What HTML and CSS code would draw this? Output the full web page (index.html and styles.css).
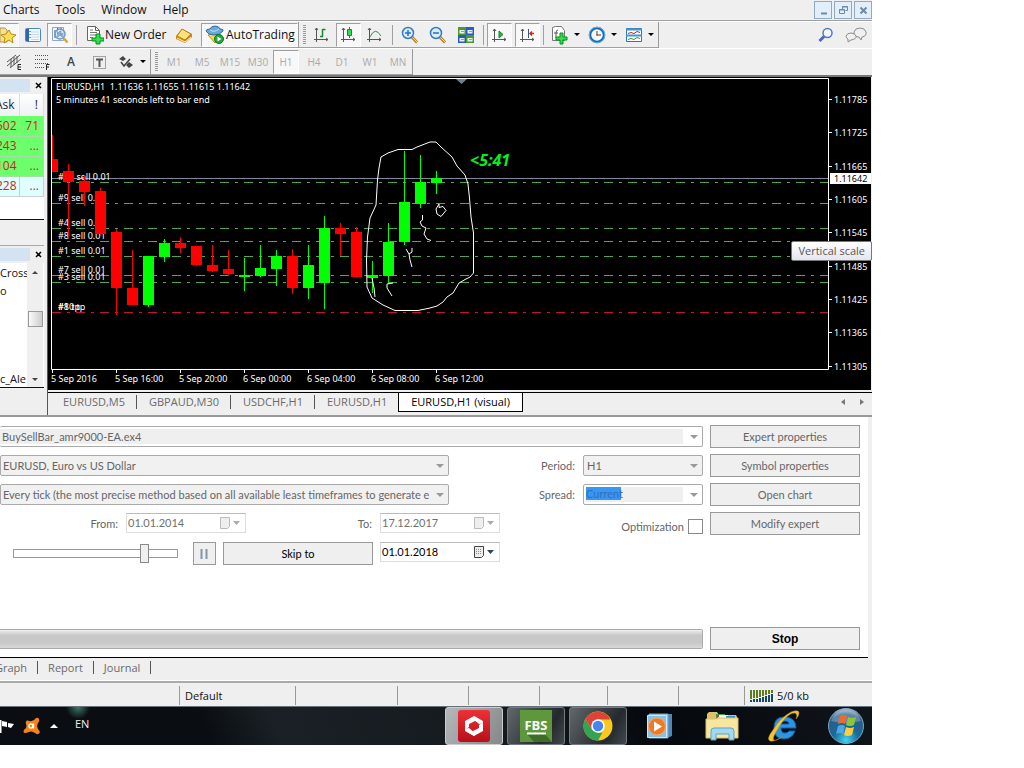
FILE: index.html
```html
<!DOCTYPE html>
<html lang="en">
<head>
<meta charset="utf-8">
<title>EURUSD,H1 (visual)</title>
<link rel="stylesheet" href="styles.css">
</head>
<body>
<div class="desktop">
  <header class="menubar">
    <nav class="menus"><a href="#">Charts</a><a href="#">Tools</a><a href="#">Window</a><a href="#">Help</a></nav>
    <div class="winbtns">
      <button aria-label="Minimize"><svg width="15" height="15"><path d="M5 10.5h6" stroke="#6d8ba6" stroke-width="2"/></svg></button>
      <button aria-label="Restore"><svg width="15" height="15" fill="none" stroke="#6d8ba6"><path d="M6.5 6V3.500h5v4h-2M6 4h6" /><path d="M3.500 6.500h5v4h-5zM3 7h6"/></svg></button>
      <button aria-label="Close"><svg width="15" height="15"><path d="M4.500 4.500l6 6m0-6l-6 6" stroke="#6d8ba6" stroke-width="2"/></svg></button>
    </div>
  </header>

  <div class="toolbar">
    <div class="group first">
      <button class="tool on cut" aria-label="Favorites"><svg width="18" height="20"><path d="M0 3h5l2 2v12H0z" fill="#f5df9a" stroke="#b99a45"/><path d="M9 5l2 4 5 1-4 3 1 5-4-3-5 3 1-5-4-3 5-1z" fill="#ffdf50" stroke="#b98a20"/></svg></button>
      <button class="tool" aria-label="Market Watch"><svg width="18" height="18"><rect x="1.500" y="2.500" width="15" height="13" rx="1" fill="#f4f9ff" stroke="#4a86c4"/><path d="M2 3h3v12H2z" fill="#2c66ad"/><path d="M7 6h8M7 8.500h8M7 11h8M7 13.500h8" stroke="#c4d8ec"/><path d="M6 5v9" stroke="#333" stroke-dasharray="1 2"/></svg></button>
      <button class="tool on" aria-label="Navigator"><svg width="20" height="20" fill="none"><path d="M2.500 2.500h11v13h-11z" fill="#f1f7ff" stroke="#8aa8cb"/><path d="M5 5v8M7.500 3v6M11 3v8" stroke="#555"/><circle cx="10" cy="9" r="5" fill="#cfe6fa" fill-opacity=".7" stroke="#6a9bd0" stroke-width="1.500"/><path d="M8 7v5M10 6v5M12 8v4" stroke="#4775a8"/><path d="M13.500 13l4 4.500" stroke="#d2a544" stroke-width="2.500"/></svg></button>
      <i class="sep"></i>
      <button class="tool text neworder"><svg width="18" height="20"><path d="M1.500 1.500h8l4 4v10h-12z" fill="#fff" stroke="#666"/><path d="M9.500 1.500v4h4" fill="none" stroke="#666"/><path d="M4 5h3M4 7.500h7M4 10h7M4 12.500h3" stroke="#777"/><path d="M10 9h4v4h4v3h-4v3h-4v-3H6v-3h4z" fill="#2fe04b" stroke="#0a8a1c"/></svg>New Order</button>
      <button class="tool" aria-label="MetaEditor"><svg width="18" height="18"><path d="M1 10l6-7 10 5v3l-7 6-9-4z" fill="#c98a14"/><path d="M2 10l5-7 9 5-6 6z" fill="#ffe07a" stroke="#b87b12"/><path d="M2 12l8 4 6-5" fill="none" stroke="#fff0b5"/></svg></button>
      <button class="tool on text auto"><svg width="20" height="20"><path d="M3 10l7 8 7-7-6-3z" fill="#f6d74c" stroke="#b7952b"/><path d="M1 6q0-2 4-2 1-3 5-3t5 3q4 0 3 2-3 4-9 4T1 6z" fill="#68a9dd" stroke="#346d9e"/><path d="M5 5q4 3 9-1" fill="none" stroke="#c4e3f8"/><circle cx="14" cy="14" r="4.500" fill="#1eab3a" stroke="#0c7422"/><path d="M12.500 11.500l4 2.500-4 2.500z" fill="#fff"/></svg>AutoTrading</button>
    </div>
    <div class="group">
      <i class="grip"></i>
      <button class="tool" aria-label="Bar Chart"><svg width="18" height="18" fill="none" stroke="#555"><path d="M3.500 2v14M1 13.500h14M2 4l1.500-2L5 4M13 12l2 1.500L13 15"/><path d="M9.500 3v8M9.500 3.500h3M7 10.500h3" stroke="#138a2c" stroke-width="1.500"/></svg></button>
      <button class="tool on" aria-label="Candlesticks"><svg width="18" height="18" fill="none" stroke="#555"><path d="M3.500 2v14M1 13.500h14M2 4l1.500-2L5 4M13 12l2 1.500L13 15"/><path d="M9.500 1v11" stroke="#138a2c"/><path d="M7.500 3.500h4v6h-4z" fill="#2edb55" stroke="#138a2c"/></svg></button>
      <button class="tool" aria-label="Line Chart"><svg width="18" height="18" fill="none" stroke="#555"><path d="M3.500 2v14M1 13.500h14M2 4l1.500-2L5 4M13 12l2 1.500L13 15"/><path d="M4 11q5-11 11-1" stroke="#2c9a45"/></svg></button>
      <i class="sep"></i>
      <button class="tool" aria-label="Zoom In"><svg width="18" height="18"><path d="M10.500 10.500l5.500 6" stroke="#b08a20" stroke-width="3"/><path d="M11 11l5 5" stroke="#f5dd70"/><circle cx="7" cy="7" r="5.500" fill="#d9eefc" stroke="#3a78c2" stroke-width="1.500"/><path d="M4 7h6M7 4v6" stroke="#2c6ebd" stroke-width="1.500"/></svg></button>
      <button class="tool" aria-label="Zoom Out"><svg width="18" height="18"><path d="M10.500 10.500l5.500 6" stroke="#b08a20" stroke-width="3"/><path d="M11 11l5 5" stroke="#f5dd70"/><circle cx="7" cy="7" r="5.500" fill="#d9eefc" stroke="#3a78c2" stroke-width="1.500"/><path d="M4 7h6" stroke="#2c6ebd" stroke-width="1.500"/></svg></button>
      <button class="tool" aria-label="Tile Windows"><svg width="18" height="18"><path d="M1 1h8v8H1zM9 9h8v8H9z" fill="#4c9a2a"/><path d="M9 1h8v8H9zM1 9h8v8H1z" fill="#2b5bbd"/><path d="M2.500 4h5v3.500h-5zM10.500 4h5v3.500h-5zM2.500 12h5v3.500h-5zM10.500 12h5v3.500h-5z" fill="#e6f1fb"/><path d="M4 5.500h3M12 5.500h3M4 13.500h3M12 13.500h3" stroke="#7aa6d0"/></svg></button>
      <i class="sep"></i>
      <button class="tool on" aria-label="Auto Scroll"><svg width="18" height="18" fill="none" stroke="#555"><path d="M3.500 3v13M1 13.500h14M2 5l1.500-2L5 5M13 12l2 1.500L13 15"/><path d="M8 5l4 3.500-4 3.500z" fill="#24b545" stroke="#138a2c"/></svg></button>
      <button class="tool on shift" aria-label="Chart Shift"><svg width="18" height="18" fill="none" stroke="#555"><path d="M3.500 3v13M1 13.500h14M2 5l1.500-2L5 5M13 12l2 1.500L13 15"/><path d="M9.500 3v9" stroke="#36598a"/><path d="M15 7.500h-4M13 5.500l-2 2 2 2" stroke="#c22c18" stroke-width="1.500"/></svg></button>
      <i class="sep"></i>
      <button class="tool drop" aria-label="Indicators"><svg width="18" height="20"><path d="M1.500 2.500l3-1h6l3 4v10h-12z" fill="#fff" stroke="#777"/><path d="M7 5q-2 0-2 3v5M3 8h4" stroke="#555" fill="none"/><path d="M9 8h3v4h4v3h-4v4H9v-4H5v-3h4z" fill="#2fe04b" stroke="#0a8a1c"/></svg></button>
      <button class="tool drop" aria-label="Periods"><svg width="18" height="18"><circle cx="9" cy="9" r="7" fill="#f4faff" stroke="#1668b5" stroke-width="2.500"/><circle cx="9" cy="9" r="7.800" fill="none" stroke="#58b5ee"/><path d="M9 5v4h4" fill="none" stroke="#444"/><circle cx="9" cy="9" r="1" fill="#e05b22"/></svg></button>
      <button class="tool drop" aria-label="Templates"><svg width="18" height="18" fill="none"><path d="M1.500 2.500h15v13h-15z" fill="#fff" stroke="#2c74b8"/><path d="M1 3.500h16M1 9.500h16" stroke="#4c92cf" stroke-width="2"/><path d="M3 7.500l3-1 3 1 3-2 3 1" stroke="#9a352c"/><path d="M3 13.500l3-1 3 1 3-2 3 1" stroke="#2d9c42"/></svg></button>
    </div>
    <div class="right">
      <button class="tool" aria-label="Search"><svg width="16" height="16" fill="none"><path d="M6.500 9l-5 5" stroke="#4e69bb" stroke-width="3"/><circle cx="9.500" cy="6" r="4.500" fill="#f3f8ff" stroke="#5573c9" stroke-width="1.500"/></svg></button>
      <button class="tool" aria-label="Chat"><svg width="22" height="18" fill="#f0f0f0" stroke="#8b8b8b"><path d="M9 6q1-4 6-4t6 4-4 5l-1 3-2-3q-5 0-5-5z"/><path d="M1 10q1-3 5-3t5 3-5 4l-3 2v-3q-2-1-2-3z"/></svg></button>
    </div>
  </div>

  <div class="toolbar second">
    <div class="group first">
      <button class="tool" aria-label="Equidistant Channel"><svg width="18" height="18" fill="none" stroke="#555"><path d="M1 13L14 2M1 9l9-7M4 15l11-9M5 6v8M8 4v8M11 3v7"/><path d="M15 11.500h-3v5h3M12 14h3" stroke="#222"/></svg></button>
      <button class="tool" aria-label="Fibonacci"><svg width="18" height="18" fill="none"><path d="M1 2.500h14M1 6.500h14M1 10.500h14M1 14.500h9" stroke="#555" stroke-dasharray="1 1"/><path d="M12.500 17v-5.500h3M12 14h3" stroke="#222"/></svg></button>
      <button class="tool letter">A</button>
      <button class="tool" aria-label="Text Label"><svg width="18" height="18" fill="none"><path d="M3.500 3.500h12v12h-12z" stroke="#555" stroke-dasharray="1 1"/><path d="M6 6.500h7M9.500 6v8" stroke="#555" stroke-width="2"/></svg></button>
      <button class="tool drop arrows" aria-label="Arrows"><svg width="18" height="18"><path d="M2 6l4-3 3 3-3 2zM9 12l3-3 4 3-4 3z" fill="#444"/><path d="M4 9l3 4 6-7" fill="none" stroke="#444" stroke-width="1.500"/></svg></button>
    </div>
    <div class="group frames">
      <i class="grip"></i>
      <button>M1</button><button>M5</button><button>M15</button><button>M30</button><button class="on">H1</button><button>H4</button><button>D1</button><button>W1</button><button>MN</button>
    </div>
  </div>

  <main class="work">
    <aside class="side">
      <div class="panelhead"><span></span><button aria-label="Close Market Watch"><svg width="7" height="7"><path d="M1 1l5 5m0-5L1 6" stroke="#000" stroke-width="1.500"/></svg></button></div>
      <table class="watch">
        <thead><tr><th>Ask</th><th>!</th></tr></thead>
        <tbody>
          <tr><td>502</td><td>71</td></tr>
          <tr><td>243</td><td>...</td></tr>
          <tr><td>104</td><td>...</td></tr>
          <tr class="cyan"><td>228</td><td>...</td></tr>
        </tbody>
      </table>
      <div class="blank"></div>
      <div class="spacer"></div>
      <div class="panelhead"><span></span><button aria-label="Close Navigator"><svg width="7" height="7"><path d="M1 1l5 5m0-5L1 6" stroke="#000" stroke-width="1.500"/></svg></button></div>
      <div class="tree">
        <div class="names"><span>Cross_</span><span>o</span><span class="last">c_Ale</span></div>
        <div class="scroll"><i class="up"></i><i class="thumb"></i><i class="down"></i></div>
      </div>
    </aside>

    <section class="charts">
      <div class="chartbox">
      <svg class="chart" viewBox="48 77 823 313" role="img" aria-label="EURUSD H1 chart">
        <rect x="48" y="77" width="823" height="313" fill="#000"/>
        <path d="M456 79h11l-5.500 5z" fill="#708090"/>
        <g><text x="56" y="90">EURUSD,H1&#160; 1.11636 1.11655 1.11615 1.11642</text><text x="56" y="103">5 minutes 41 seconds left to bar end</text></g>
        <path d="M52 178.500H828" stroke="#8288a0"/>
        <path class="orders" d="M52 182.500H828M52 203.500H828M52 228.500H828M52 241.500H828M52 256.500H828M52 275.500H828M52 282.500H828"/>
        <path class="orders loss" d="M52 312.500H828"/>
        <g>
          <text x="58" y="180">#10 sell 0.01</text><text x="58" y="201">#9 sell 0.01</text><text x="58" y="226">#4 sell 0.01</text><text x="58" y="239">#8 sell 0.01</text><text x="58" y="254">#1 sell 0.01</text><text x="58" y="273">#7 sell 0.01</text><text x="58" y="280">#3 sell 0.01</text><text x="58" y="310">#8 tp</text><text x="58" y="310">#10 tp</text>
        </g>
        <path class="wick down" d="M52.500 135V172M68.500 164V238M84.500 175V206M100.500 188V236M116.500 229V315M132.500 250V305M180.500 237V253M196.500 246V266M212.500 245V272M228.500 250V276M292.500 249V294M340.500 223V256M356.500 227V278"/>
        <path class="wick up" d="M148.500 256V307M164.500 239V262M244.500 258V291M260.500 245V277M276.500 250V286M308.500 245V299M324.500 216V309M372.500 261V293M388.500 223V284M404.500 151V245M420.500 155V208M436.500 171V194"/>
        <path fill="#f00" d="M52 159h6v13h-6zM63 171h11v11h-11zM79 181h11v11h-11zM95 191h11v43h-11zM111 232h11v56h-11zM127 288h11v17h-11zM175 243h11v5h-11zM191 246h11v19h-11zM207 265h11v6h-11zM223 269h11v5h-11zM287 256h11v32h-11zM335 228h11v6h-11zM351 232h11v45h-11z"/>
        <path fill="#0f0" d="M143 256h11v49h-11zM159 243h11v14h-11zM239 275h11v2h-11zM255 268h11v8h-11zM271 256h11v13h-11zM303 265h11v23h-11zM319 228h11v55h-11zM367 275h11v3h-11zM383 242h11v34h-11zM399 202h11v40h-11zM415 182h11v22h-11zM431 178h11v5h-11z"/>
        <path class="ink" d="M381 157L388 153 398 149.500 412 149.500 417 147 430 142 436 142 441 147 452 157 457 166 465 175 468 184 469.500 198 471 217 473.500 233 473.500 273 470 277 466 279 459 283 453 293 447 297 443 302 437 306 430 308 418 310.500 395 310.500 383 305 372 298 367 287 366.500 260 367.500 237 370 218 376 205 377.500 180 379 168z"/>
        <path class="ink" d="M422.500 215v5l-2.500 2 2 4 4 2-2 6 3 5 4 1.500M406 249l3 5 3-2v-4M409 254l1 6 2 7M372 278l2 10 1 9M393 283l-6 1v4l5 8M439 204l-3 5 1 5 4 2.500 5-6-3-4-4 1z"/>
        <text class="timer" x="470" y="166">&lt;5:41</text>
        <path d="M51.500 78.500H828.500V369.500H51.500z" fill="none" stroke="#fff"/>
        <path stroke="#fff" d="M829 99.500h3M829 132.500h3M829 166.500h3M829 199.500h3M829 232.500h3M829 266.500h3M829 299.500h3M829 332.500h3M829 366.500h3M52.500 370v3M116.500 370v3M180.500 370v3M244.500 370v3M308.500 370v3M372.500 370v3M436.500 370v3"/>
        <rect x="830" y="173" width="41" height="11" fill="#fff"/>
        <g><text x="834" y="103">1.11785</text><text x="834" y="136">1.11725</text><text x="834" y="170">1.11665</text><text x="834" y="182" fill="#000">1.11642</text><text x="834" y="203">1.11605</text><text x="834" y="236">1.11545</text><text x="834" y="270">1.11485</text><text x="834" y="303">1.11425</text><text x="834" y="336">1.11365</text><text x="834" y="370">1.11305</text></g>
        <g><text x="51" y="382">5 Sep 2016</text><text x="115" y="382">5 Sep 16:00</text><text x="179" y="382">5 Sep 20:00</text><text x="243" y="382">6 Sep 00:00</text><text x="307" y="382">6 Sep 04:00</text><text x="371" y="382">6 Sep 08:00</text><text x="435" y="382">6 Sep 12:00</text></g>
      </svg>
      <div class="tip" role="tooltip">Vertical scale</div>
      </div>
      <nav class="tabs"><a href="#">EURUSD,M5</a><a href="#">GBPAUD,M30</a><a href="#">USDCHF,H1</a><a href="#" class="plain">EURUSD,H1</a><a href="#" class="active">EURUSD,H1 (visual)</a>
        <span class="nudge"><button aria-label="Scroll tabs left"><svg width="4" height="6"><path d="M4 0v6L0 3z" fill="#777"/></svg></button><button aria-label="Scroll tabs right"><svg width="4" height="6"><path d="M0 0v6l4-3z" fill="#777"/></svg></button></span></nav>
    </section>
  </main>

  <section class="tester">
    <form class="form">
      <div class="row">
        <div class="combo open"><select aria-label="Expert" disabled><option>BuySellBar_amr9000-EA.ex4</option></select></div>
        <button type="button" class="btn off">Expert properties</button>
      </div>
      <div class="row">
        <div class="combo"><select aria-label="Symbol" disabled><option>EURUSD, Euro vs US Dollar</option></select></div>
        <label for="period">Period:</label>
        <div class="combo small"><select id="period" disabled><option>H1</option></select></div>
        <button type="button" class="btn off">Symbol properties</button>
      </div>
      <div class="row">
        <div class="combo"><select aria-label="Model" disabled><option>Every tick (the most precise method based on all available least timeframes to generate each tick)</option></select></div>
        <label for="spread">Spread:</label>
        <div class="combo open small"><input id="spread" value="Current" readonly></div>
        <button type="button" class="btn off">Open chart</button>
      </div>
      <div class="row">
        <label class="from" for="from">From:</label>
        <div class="date off"><input id="from" value="01.01.2014" disabled><svg width="22" height="14"><path d="M1.500 1.500h9v9l-2 2h-7z" fill="#eee" stroke="#bbb"/><path d="M14 5h7l-3.500 4z" fill="#aaa"/></svg></div>
        <label for="to">To:</label>
        <div class="date off"><input id="to" value="17.12.2017" disabled><svg width="22" height="14"><path d="M1.500 1.500h9v9l-2 2h-7z" fill="#eee" stroke="#bbb"/><path d="M14 5h7l-3.500 4z" fill="#aaa"/></svg></div>
        <label class="opt">Optimization <input type="checkbox" disabled></label>
        <button type="button" class="btn off">Modify expert</button>
      </div>
      <div class="row skip">
        <input class="slider" type="range" min="0" max="100" value="82" aria-label="Speed">
        <button type="button" class="btn pause" aria-label="Pause"><svg width="9" height="12"><path d="M1.500 1v10M6.500 1v10" stroke="#8594a8" stroke-width="2"/></svg></button>
        <button type="button" class="btn">Skip to</button>
        <div class="date"><input aria-label="Skip to date" value="01.01.2018"><svg width="22" height="14"><path d="M1.500 1.500h9v9l-2 2h-7z" fill="#eee" stroke="#444"/><path d="M3 4.500h6M3 6.500h6M3 8.500h6" stroke="#888" stroke-dasharray="1 1"/><path d="M14 5h7l-3.500 4z" fill="#345"/></svg></div>
      </div>
      <div class="row run">
        <div class="progress" role="progressbar" aria-label="Testing progress"></div>
        <button type="button" class="btn halt">Stop</button>
      </div>
    </form>
  </section>
  <nav class="subtabs"><a href="#">Graph</a><a href="#">Report</a><a href="#">Journal</a></nav>

  <footer class="status">
    <span class="s1"></span><span class="s2">Default</span><span class="s3"></span><span class="s4"></span><span class="s4"></span><span class="s5"></span><span class="s4"></span><span class="s6"></span>
    <span class="net"><svg width="24" height="14"><path d="M1 1v9M4 1v8M7 1v8M10 1v7M13 1v6M16 1v5M19 1v4M22 1v3" stroke="#5c7d1e" stroke-width="2"/><path d="M1 11v2M4 10v3M7 10v3M10 9v4M13 8v5M16 7v6M19 6v7M22 5v8" stroke="#164866" stroke-width="2"/></svg>5/0 kb</span>
  </footer>

  <div class="taskbar">
    <div class="tray">
      <svg width="14" height="16"><path d="M0 2h1.500v13H0zM2 3l5 1v5L2 8zM8 5l6 1-3 4-3-1z" fill="#fff"/></svg>
      <svg width="18" height="18"><path d="M5 3.500Q8 5 11 3l2-2q2-1 3 1t-1 4l-1 3 1 3q3 3 1 4.500T12 16l-2-1q-2-1-4 0-5 2-5.500 0T3 11q1-2 0-4-1-4 2-3.500z" fill="#f58216"/><circle cx="8" cy="9" r="2" fill="none" stroke="#fff" stroke-width="1.300"/><path d="M10.500 6.500v5" stroke="#fff" stroke-width="1.300"/></svg>
      <svg width="8" height="6"><path d="M0 5h8L4 1z" fill="#fff"/></svg>
      <span>EN</span>
    </div>
    <div class="apps">
      <button class="running lit" aria-label="Trading terminal"><svg width="32" height="32"><defs><linearGradient id="r" x2="0" y2="1"><stop stop-color="#ee3038"/><stop offset="1" stop-color="#b80f19"/></linearGradient></defs><rect width="32" height="32" rx="3" fill="url(#r)"/><path d="M7 20v-9l9-5 5 3-10 5v3zM25 12v9l-9 5-5-3 10-5v-3z" fill="#fff"/><path d="M16 6l9 5v2l-4 1-6-5zM16 26l-9-5v-2l4-1 6 5z" fill="#fff"/></svg></button>
      <button class="running" aria-label="FBS"><svg width="32" height="32"><rect width="32" height="32" fill="#5f973d"/><path d="M7 24h18l7 8H14z" fill="#3f6d28"/><text x="16" y="20" text-anchor="middle" class="fbs">FBS</text><path d="M7 23.500h19" stroke="#fff" stroke-width="2"/></svg></button>
      <button class="running" aria-label="Chrome"><svg width="30" height="30"><circle cx="15" cy="15" r="14.500" fill="#fbc91d"/><path d="M15 29.500A14.500 14.500 0 0 1 2.400 7.700L9 18.500 15 22l4.500-.5z" fill="#35a353"/><path d="M9 18.500L2.400 7.700A14.500 14.500 0 0 1 27.600 8.500H15z" fill="#db4437"/><circle cx="15" cy="15" r="6.800" fill="#fff"/><circle cx="15" cy="15" r="5.200" fill="#4285f4"/></svg></button>
      <button aria-label="Media Player"><svg width="28" height="28"><path d="M5 2h21v22l-5 2H5z" fill="#4d88b6"/><path d="M3 2h19v24H3z" fill="#a6d3ee" stroke="#6ca7cf"/><path d="M1.500 3.500h19v22h-19z" fill="#8bbfe0" stroke="#cfe8f7"/><circle cx="11" cy="14.500" r="8.500" fill="#ef7a25" stroke="#f6a861"/><path d="M8 9.500l8 5-8 5z" fill="#fff"/></svg></button>
      <button aria-label="Explorer"><svg width="34" height="30"><path d="M2 3l2-2h8l2 3h17l1 2v20H2z" fill="#dfc36a"/><path d="M11 3h9v5h-9z" fill="#3d9a4b"/><path d="M13 4h10v4H13z" fill="#fff"/><path d="M21 5h9v4h-9z" fill="#2d8fd0"/><path d="M12 4h2v2h-2z" fill="#d33"/><path d="M1 8h10l2-1h20v20H1z" fill="#f6e6a0" stroke="#dcc26c"/><path d="M6 29v-9q0-3 3-3h17q3 0 3 3v9h-5v-6H11v6z" fill="#a5d8f0" stroke="#58a4cb"/></svg></button>
      <button aria-label="Internet Explorer"><svg width="34" height="32"><path d="M29 18H14q0 5 4 5 3 0 4-2h6q-3 8-11 8-10 0-10-11T17 7q12 0 12 11zM14 14h8q0-3-4-3t-4 3z" fill="#2a95e2" stroke="#0e60ae"/><path d="M9 22q-4 7-2 8 3 1 9-4-8 6-13 5-4-2 3-11Q13 8 24 2q8-3 8 1 0 3-3 6 2-5-1-6-8-1-19 19z" fill="#f3c530" stroke="#b98818" stroke-width=".5"/></svg></button>
      <button aria-label="Start"><svg width="38" height="36"><defs><radialGradient id="orb" cx=".5" cy=".9" r=".9"><stop stop-color="#3fd5f5"/><stop offset=".4" stop-color="#176a9d"/><stop offset=".8" stop-color="#2c5c83"/><stop offset="1" stop-color="#a5c3d9"/></radialGradient></defs><circle cx="19" cy="18" r="17.500" fill="url(#orb)" stroke="#7ba5c2"/><path d="M4 13Q8 2 19 2t15 11Q19 17 4 13z" fill="#fff" fill-opacity=".25"/><path d="M13 8q4-2 7 0l-2 8q-3-2-7 0z" fill="#ef6a32"/><path d="M21 9q4 2 8 0l-2 8q-4 2-8 0z" fill="#8cc63f"/><path d="M11 18q4-2 7 0l-2 8q-3-2-7 0z" fill="#4fa5e5"/><path d="M19 19q4 2 8 0l-2 8q-4 2-8 0z" fill="#fccf3c"/></svg></button>
    </div>
  </div>
</div>
</body>
</html>
```
FILE: styles.css
```css
* { box-sizing: border-box; }
body { margin: 0; padding-right: 152px; background: #fff; font: 11px/16px "Open Sans", "Noto Sans", sans-serif; color: #111; overflow-x: hidden; }
a { color: inherit; text-decoration: none; }
button { font: inherit; color: inherit; background: none; border: 0; padding: 0; margin: 0; }
svg { display: block; flex: none; }
.desktop { background: #efefef; }

.menubar { display: flex; justify-content: space-between; height: 21px; border-bottom: 1px solid #a0a0a0; font-size: 12px; }
.menus { display: flex; gap: 16px; padding: 2px 0 0 3px; }
.winbtns { display: flex; gap: 2px; padding-top: 1px; }
.winbtns button { width: 18px; height: 18px; border: 1px solid #93a9bd; background: #e2effa; display: grid; place-items: center; }

.toolbar { display: flex; height: 27px; border-top: 1px solid #fff; align-items: stretch; font-size: 12px; }
.toolbar .group { display: flex; align-items: center; border-right: 1px solid #999; border-bottom: 1px solid #a0a0a0; padding-left: 4px; }
.toolbar .first { padding-left: 0; }
.second .first { padding-left: 1px; }
.tool { width: 28px; height: 25px; display: flex; align-items: center; justify-content: center; }
.tool.on, .frames .on { background: #f8f8f8; border: 1px solid #a0a0a0; border-right-color: #fff; border-bottom-color: #fff; width: 25px; height: 24px; }
.tool.cut { width: 19px; border-left: 0; overflow: hidden; }
.tool.text { width: auto; gap: 1px; }
.neworder { padding: 0 4px 0 5px; }
.tool.auto { width: 97px; margin-left: 3px; }
.tool.shift { margin-left: 3px; }
.sep { width: 1px; height: 20px; background: #a0a0a0; margin: 0 4px; }
.group + .group .sep { margin: 0 3px; }
.grip { width: 3px; height: 19px; margin-right: 2px; background: repeating-linear-gradient(#999 0 1px, #eee 1px 2px); }
.tool.drop { width: 37px; gap: 5px; }
.tool.drop::after { content: ""; border: 3px solid transparent; border-top-color: #000; border-bottom: 0; }
.right { margin-left: auto; display: flex; align-items: center; padding-right: 2px; gap: 2px; }
.letter { color: #444; font-weight: 600; }
.frames { color: #aaa; font-size: 10px; }
.frames button { width: 28px; height: 24px; }
.frames .on { width: 26px; margin: 0 1px; }

.work { display: flex; border-top: 2px solid #777; align-items: stretch; }
.side { width: 45px; flex: none; display: flex; flex-direction: column; padding-right: 1px; overflow: hidden; }
.panelhead { display: flex; justify-content: space-between; align-items: center; height: 17px; padding-right: 1px; flex: none; }
.panelhead span { width: 30px; height: 13px; background: #d3e3f2; }
.panelhead button { padding: 0 1px; }
.watch { border-collapse: collapse; width: 100%; table-layout: fixed; color: #c22; font-size: 12px; }
.watch th { height: 22px; padding: 0; background: linear-gradient(#fff, #eef0f4); color: #223; font-weight: 400; text-align: right; border-right: 1px solid #ddd; }
.watch th:first-child { width: 19px; direction: rtl; white-space: nowrap; padding-right: 4px; }
.watch th, .watch td { overflow: hidden; }
.watch th:last-child { padding-right: 5px; }
.watch td { height: 20px; padding: 0 4px 0 0; text-align: right; background: #6cff6c; border: 1px solid #a6dca6; border-left: 0; border-top: 0; }
.watch td:first-child { direction: rtl; padding-right: 2px; }
.watch .cyan td { background: #dfffff; border-color: #ccd; }
.blank { height: 23px; background: #fff; border-bottom: 1px solid #111; }
.spacer { height: 26px; border-bottom: 1px solid #aaa; }
.tree { display: flex; flex: 0 0 125px; background: #fff; border-bottom: 1px solid #111; }
.names { width: 27px; overflow: hidden; display: flex; flex-direction: column; gap: 2px; padding-top: 2px; white-space: nowrap; }
.names .last { margin-top: auto; }
.scroll { width: 16px; background: #efefef; display: flex; flex-direction: column; align-items: center; padding: 8px 0 6px; }
.up { border: 3px solid transparent; border-bottom-color: #444; border-top: 0; }
.down { border: 3px solid transparent; border-top-color: #444; border-bottom: 0; margin-top: auto; }
.thumb { width: 15px; height: 16px; margin-top: 37px; border: 1px solid #999; background: linear-gradient(90deg, #fafafa, #ccc); }

.charts { flex: 1; min-width: 0; margin-left: 2px; border-left: 1px solid #555; }
.chartbox { position: relative; padding-right: 1px; }
.chart { width: 100%; height: auto; font: 9px "Noto Sans", sans-serif; fill: #fff; }
.orders { fill: none; stroke: #4faa4f; stroke-dasharray: 9 6 3 6; }
.orders.loss { stroke: #c01830; }
.wick { fill: none; }
.wick.up { stroke: #0f0; }
.wick.down { stroke: #f00; }
.ink { fill: none; stroke: #fff; }
.timer { font: italic bold 16px "Open Sans", sans-serif; fill: #00f020; }
.tip { position: absolute; right: 0; top: 164px; height: 20px; padding: 1px 6px; border: 1px solid #777; border-radius: 2px; background: linear-gradient(#fff, #e4e5f0); color: #575757; white-space: nowrap; }
.tabs { display: flex; align-items: flex-start; height: 23px; margin-top: 2px; border-top: 1px solid #000; color: #6a6a6a; padding-left: 3px; }
.tabs a { padding: 0 11px 0 12px; margin-top: 2px; line-height: 14px; border-right: 1px solid #555; }
.tabs .plain { border-right: 0; }
.tabs .active { margin: 0; padding: 0 12px; line-height: 18px; background: #fff; color: #000; border: 1px solid #000; border-top: 0; }
.nudge { margin-left: auto; display: flex; gap: 15px; padding: 6px 8px 0 0; }

.tester { border-top: 2px solid #999; padding-right: 4px; font: 11px/14px Lato, "Liberation Sans", sans-serif; color: #666; }
.form { background: #fff; border-bottom: 1px solid #000; padding: 8px 8px 7px 0; display: flex; flex-direction: column; gap: 6px; }
.row { display: flex; align-items: center; height: 23px; }
.row > .btn:last-child, .row > .date:last-child { margin-left: 7px; }
.btn { width: 150px; height: 23px; flex: none; border: 1px solid #999; background: #efefef; color: #000; }
.btn.off { color: #666; }
.combo { position: relative; flex: 1; height: 21px; min-width: 0; }
.combo select, .combo input { appearance: none; width: 100%; height: 21px; font: inherit; color: #666; opacity: 1; background: #f1f1f1; border: 1px solid #aaa; border-radius: 2px; padding: 0 19px 0 2px; margin: 0; display: block; }
.combo::after { content: ""; position: absolute; right: 5px; top: 9px; border: 4px solid transparent; border-top-color: #999; border-bottom: 0; }
.combo.open select { background: linear-gradient(#efefef, #efefef) 0 2px / calc(100% - 19px) 15px no-repeat #fff; border-left: 0; }
.combo.small { flex: 0 0 120px; }
.combo.small select { padding-left: 3px; }
.combo.open input { padding: 0 2px 2px; color: #3470b4; background: linear-gradient(#3797f5, #3797f5) 2px 2px / 35px 13px no-repeat, linear-gradient(#efefef, #efefef) 2px 2px / calc(100% - 21px) 15px no-repeat #fff; }
.row label { flex: 0 0 134px; text-align: right; padding-right: 8px; }
.row .from { flex-basis: 126px; }
.row .opt { flex: 1; display: flex; justify-content: flex-end; align-items: center; gap: 4px; padding: 6px 0 0; }
.opt input { appearance: none; width: 15px; height: 15px; margin: 0; border: 1px solid #888; background: #fff; }
.date { display: flex; align-items: center; flex: 0 0 120px; height: 20px; border: 1px solid #ddd; border-top-color: #bbb; padding-right: 4px; align-self: flex-start; }
.date input { width: 90px; flex: 1; border: 0; padding: 0 1px; font: inherit; color: #000; background: none; }
.date.off { margin-top: 1px; }
.date.off input { color: #707070; }
.skip { margin-top: 1px; }
.slider { appearance: none; width: 165px; height: 21px; margin: 0 15px 0 13px; background: none; }
.slider::-webkit-slider-runnable-track { height: 9px; border: 1px solid #999; background: #fff; }
.slider::-webkit-slider-thumb { appearance: none; width: 9px; height: 19px; margin-top: -6px; border: 1px solid #888; background: #efefef; }
.pause { width: 23px; margin-right: 7px; display: grid; place-items: center; }
.run { margin-top: 56px; }
.progress { flex: 1; height: 20px; border: 1px solid #aaa; border-left: 0; border-radius: 0 2px 2px 0; background: linear-gradient(#eee, #c8c8c8 30%, #c8c8c8 70%, #d8d8d8); }
.btn.halt { font: bold 12px "Liberation Sans", Arial, sans-serif; }
.subtabs { display: flex; height: 23px; margin-left: -5px; padding-top: 3px; color: #6a6a6a; border-bottom: 1px solid #fff; }
.subtabs a { height: 13px; line-height: 13px; padding: 0 10px; border-right: 1px solid #555; }
.subtabs a:first-child { padding-left: 0; }

.status { display: flex; height: 25px; border-top: 2px solid #aaa; padding: 3px 0 1px; line-height: 19px; }
.status span { border-right: 1px solid #999; padding-left: 5px; flex: none; }
.s1 { width: 180px; }
.s2 { width: 116px; }
.s3 { width: 102px; }
.s4 { width: 71px; }
.s5 { width: 68px; }
.s6 { width: 66px; }
.status .net { flex: 1; border: 0; display: flex; align-items: center; gap: 3px; }

.taskbar { display: flex; justify-content: space-between; height: 39px; border-top: 1px solid #68727a; background: radial-gradient(circle at 78px 0, #3b7a66 0, transparent 12px), linear-gradient(65deg, #0a0e13 0 24%, #1a2025 32%, #14191e 60%, #05080d 75%, #10151b); }
.tray { display: flex; gap: 9px; align-items: center; color: #eee; }
.tray span { padding: 0 0 5px 8px; }
.apps { display: flex; gap: 4px; padding-right: 3px; margin-right: -6px; }
.apps button { width: 58px; display: grid; place-items: center; }
.apps .running { border: 1px solid #737a80; border-radius: 3px; background: linear-gradient(120deg, #62676c, #24292e 70%, #43484d); }
.apps .lit { background: linear-gradient(120deg, #b5b7b9, #85888b); border-color: #ccc; }
.fbs { font: bold 13px "Open Sans", sans-serif; fill: #fff; }
```
